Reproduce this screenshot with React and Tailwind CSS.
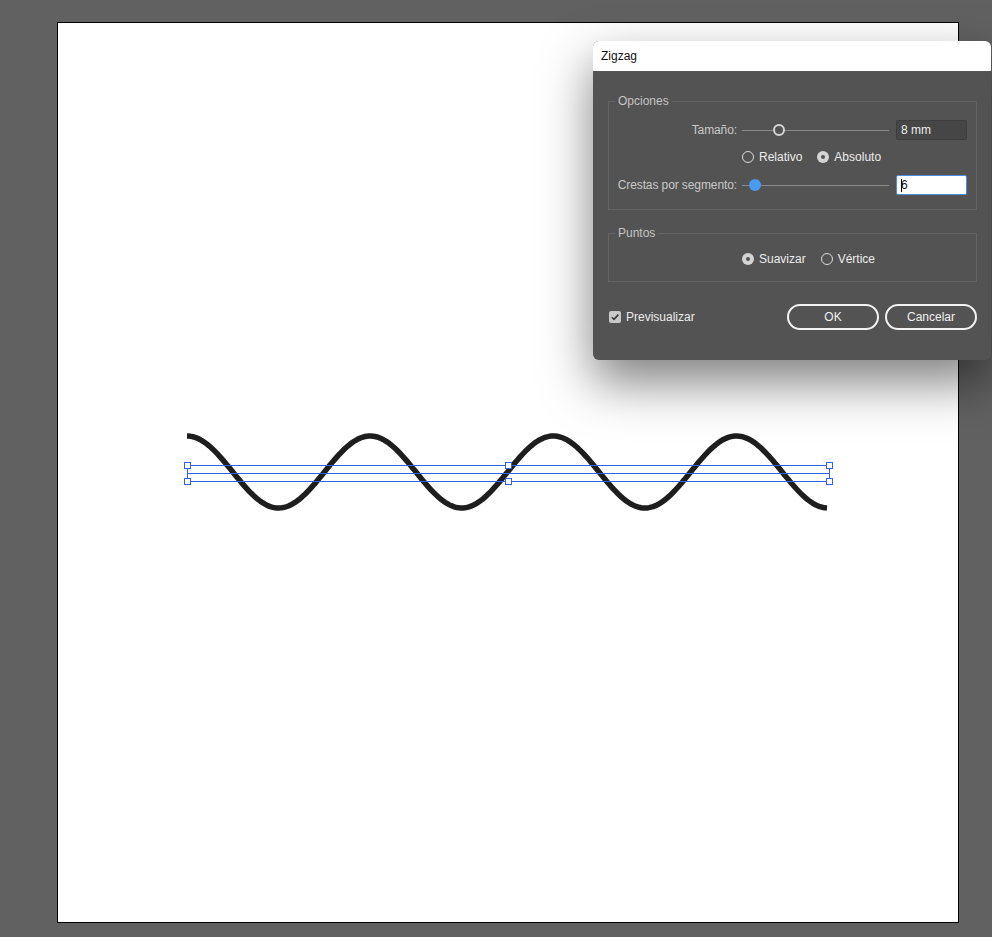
import React from "react";

const font = { fontFamily: '"Liberation Sans", Arial, sans-serif' };

// sine wave of the zigzag effect, in page coordinates
const wavePath = (() => {
  const x0 = 187;
  const x1 = 828;
  const period = (x1 - x0) / 3.5;
  const pts = [];
  for (let x = x0; x <= x1 + 0.01; x += 2) {
    const y = 472 - 36 * Math.cos((2 * Math.PI * (x - x0)) / period);
    pts.push(`${x.toFixed(1)},${y.toFixed(2)}`);
  }
  return "M" + pts.join(" L");
})();

const anchors = [
  [187, 465],
  [187, 481],
  [508, 465],
  [508, 481],
  [829, 465],
  [829, 481],
];

const Radio = ({ checked, label }) => {
  return (
    <div className="flex items-center">
      {checked ? (
        <div className="flex h-[12px] w-[12px] items-center justify-center rounded-full bg-[#d4d4d4]">
          <div className="h-[4px] w-[4px] rounded-full bg-[#535353]"></div>
        </div>
      ) : (
        <div className="h-[12px] w-[12px] rounded-full border-[1.5px] border-[#dcdcdc]"></div>
      )}
      <span className="ml-[5px] text-[12px] leading-[16px] text-[#ececec]">
        {label}
      </span>
    </div>
  );
};

const Slider = ({ pos, blue }) => {
  return (
    <div className="relative ml-[5px] h-[20px] w-[147px]">
      <div className="absolute left-0 right-0 top-[10px] h-px bg-[#8a8a8a]"></div>
      {blue ? (
        <div
          className="absolute top-[4px] h-[12px] w-[12px] rounded-full bg-[#4a9af0]"
          style={{ left: pos }}
        ></div>
      ) : (
        <div
          className="absolute top-[4px] h-[12px] w-[12px] rounded-full border-2 border-[#d6d6d6] bg-[#535353]"
          style={{ left: pos }}
        ></div>
      )}
    </div>
  );
};

const Legend = ({ text }) => {
  return (
    <span className="absolute left-[6px] top-[-9px] bg-[#535353] px-[3px] text-[12px] leading-[16px] text-[#c4c4c4]">
      {text}
    </span>
  );
};

export default function App() {
  return (
    <div
      className="relative h-[937px] w-[992px] overflow-hidden bg-[#616161]"
      style={font}
    >
      {/* artboard */}
      <div className="relative ml-[57px] mt-[22px] h-[901px] w-[902px] border border-black bg-white">
        <svg
          className="absolute left-[-1px] top-[-1px]"
          width="902"
          height="901"
          viewBox="57 22 902 901"
        >
          <path
            d={wavePath}
            fill="none"
            stroke="#1e1e1e"
            strokeWidth="5.5"
          />
          {/* selection box */}
          <g fill="#2f62e6" shapeRendering="crispEdges">
            <rect x="187" y="465" width="643" height="1" />
            <rect x="187" y="473" width="643" height="1" />
            <rect x="187" y="481" width="643" height="1" />
            <rect x="187" y="465" width="1" height="17" />
            <rect x="829" y="465" width="1" height="17" />
          </g>
          {anchors.map(([x, y], i) => (
            <rect
              key={i}
              x={x - 2.5}
              y={y - 2.5}
              width="6"
              height="6"
              fill="#fff"
              stroke="#2f62e6"
              strokeWidth="1"
              shapeRendering="crispEdges"
            />
          ))}
        </svg>
      </div>

      {/* Zigzag dialog */}
      <div className="absolute left-[593px] top-[41px] h-[319px] w-[398px] rounded-[6px] bg-[#535353] shadow-[0_22px_50px_rgba(0,0,0,0.5)]">
        <div className="flex h-[30px] items-center rounded-t-[6px] bg-white pl-[8px] text-[12px] text-[#111]">
          Zigzag
        </div>
        <div className="pl-[15px] pt-[30px]">
          {/* Opciones */}
          <div className="relative h-[109px] w-[369px] border border-[#646464]">
            <Legend text="Opciones" />
            <div className="flex flex-col pt-[18px]">
              <div className="flex h-[20px] items-center">
                <div className="w-[128px] text-right text-[12px] tracking-[-0.1px] text-[#c8c8c8]">
                  Tamaño:
                </div>
                <Slider pos="31px" />
                <div className="ml-[7px] flex h-[20px] w-[71px] items-center rounded-[2px] border border-[#3e3e3e] bg-[#464646] pl-[4px] text-[12px] text-[#ececec]">
                  8 mm
                </div>
              </div>
              <div className="ml-[133px] mt-[9px] flex h-[16px] items-center gap-[15px]">
                <Radio label="Relativo" />
                <Radio checked label="Absoluto" />
              </div>
              <div className="mt-[10px] flex h-[20px] items-center">
                <div className="w-[128px] text-right text-[12px] tracking-[-0.1px] text-[#c8c8c8]">
                  Crestas por segmento:
                </div>
                <Slider pos="7px" blue />
                <div className="ml-[7px] flex h-[20px] w-[71px] items-center rounded-[2px] border-[1.5px] border-[#4b8de0] bg-white pl-[4px] text-[12px] text-[#111]">
                  <span className="h-[13px] w-px bg-black"></span>
                  <span className="-ml-px">6</span>
                </div>
              </div>
            </div>
          </div>

          {/* Puntos */}
          <div className="relative mt-[23px] h-[49px] w-[369px] border border-[#646464]">
            <Legend text="Puntos" />
            <div className="ml-[133px] mt-[17px] flex h-[16px] items-center gap-[15px]">
              <Radio checked label="Suavizar" />
              <Radio label="Vértice" />
            </div>
          </div>

          {/* bottom row */}
          <div className="mt-[22px] flex h-[26px] w-[369px] items-center">
            <div className="flex items-center pl-px">
              <div className="flex h-[12px] w-[12px] items-center justify-center rounded-[2px] bg-[#c8c8c8]">
                <svg width="10" height="10" viewBox="0 0 10 10">
                  <path
                    d="M1.8 5.2 L4 7.4 L8.4 2.6"
                    fill="none"
                    stroke="#3a3a3a"
                    strokeWidth="1.6"
                  />
                </svg>
              </div>
              <span className="ml-[5px] text-[12px] text-[#ececec]">
                Previsualizar
              </span>
            </div>
            <div className="ml-auto flex gap-[6px]">
              <div className="flex h-[26px] w-[92px] items-center justify-center rounded-full border-2 border-[#f2f2f2] text-[12px] text-[#f0f0f0]">
                OK
              </div>
              <div className="flex h-[26px] w-[92px] items-center justify-center rounded-full border-2 border-[#f2f2f2] text-[12px] text-[#f0f0f0]">
                Cancelar
              </div>
            </div>
          </div>
        </div>
      </div>
    </div>
  );
}
